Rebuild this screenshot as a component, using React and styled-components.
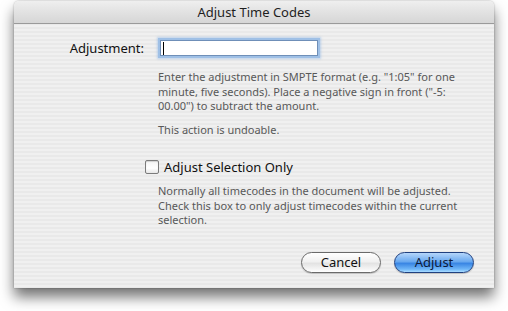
import styled, { createGlobalStyle } from "styled-components";

const GlobalStyle = createGlobalStyle`
    html, body {
        margin: 0;
        padding: 0;
        background: #ffffff;
    }
    body {
        font-family: "Noto Sans", "DejaVu Sans", sans-serif;
    }
`;

const Page = styled.div`
    width: 508px;
    height: 311px;
    padding: 1px 14px 0;
    box-sizing: border-box;
`;

const Sheet = styled.div`
    width: 480px;
    height: 287px;
    border-radius: 5px 5px 0 0;
    overflow: hidden;
    display: flex;
    flex-direction: column;
    background: repeating-linear-gradient(
        to bottom,
        #f0f0f0 0px,
        #f0f0f0 2px,
        #e9e9e9 2px,
        #e9e9e9 4px
    );
    box-shadow: 0 9px 14px rgba(0, 0, 0, 0.55), 0 0 2px rgba(0, 0, 0, 0.35);
`;

const TitleBar = styled.div`
    height: 22px;
    flex: none;
    display: flex;
    align-items: center;
    justify-content: center;
    background: linear-gradient(to bottom, #efefef 0%, #e2e2e2 50%, #d6d6d6 100%);
    border-bottom: 1px solid #9a9a9a;
    font-size: 13px;
    color: #1e1e1e;
`;

const Body = styled.div`
    flex: 1;
    display: flex;
    flex-direction: column;
    padding: 14px 20px 0 0;
`;

const Form = styled.div`
    display: grid;
    grid-template-columns: 130px 1fr;
    column-gap: 14px;
    align-items: start;
`;

const Label = styled.label`
    grid-column: 1;
    justify-self: end;
    font-size: 13px;
    color: #111;
    line-height: 20px;
`;

const Field = styled.div`
    grid-column: 2;
    width: 158px;
    height: 16px;
    margin: 2px 0 0 2px;
    background: #fff;
    border: 1px solid #6f8fb8;
    box-shadow: 0 0 0 2px #9fc0e6, 0 0 2px 3px rgba(140, 180, 230, 0.5);
    display: flex;
    align-items: center;
    padding-left: 2px;
    box-sizing: border-box;
`;

const Caret = styled.span`
    width: 1px;
    height: 13px;
    background: #000;
`;

const Help = styled.p`
    grid-column: 2;
    margin: ${(p) => p.$top}px 0 0;
    font-size: 11px;
    line-height: 14.7px;
    color: #585858;
`;

const CheckRow = styled.label`
    grid-column: 2;
    margin: 21px 0 0 -13px;
    display: flex;
    align-items: center;
    gap: 5px;
    font-size: 13px;
    color: #111;
    line-height: 16px;
`;

const Box = styled.span`
    width: 12px;
    height: 12px;
    border: 1px solid #7b7b7b;
    border-radius: 2px;
    background: linear-gradient(to bottom, #f4f4f4 0%, #ffffff 60%, #e6e6e6 100%);
    box-shadow: inset 0 1px 1px rgba(0, 0, 0, 0.15);
`;

const Buttons = styled.div`
    margin-top: auto;
    margin-bottom: 15px;
    display: flex;
    justify-content: flex-end;
    gap: 13px;
`;

const Button = styled.button`
    width: ${(p) => p.$w}px;
    height: 21px;
    border-radius: 11px;
    font-family: inherit;
    font-size: 13px;
    padding: 0;
    line-height: 19px;
    cursor: default;
    border: 1px solid ${(p) => (p.$primary ? "#20407f" : "#6a6a6a")};
    color: ${(p) => (p.$primary ? "#0c1a3a" : "#111")};
    background: ${(p) =>
        p.$primary
            ? "linear-gradient(to bottom, #b5d6fb 0%, #6aa9ef 45%, #3a86e4 55%, #6fb6f8 85%, #a9dcff 100%)"
            : "linear-gradient(to bottom, #ffffff 0%, #f1f1f1 45%, #e3e3e3 55%, #f5f5f5 85%, #ffffff 100%)"};
    box-shadow: 0 1px 1px rgba(0, 0, 0, 0.2);
`;

export default function App() {
    return (
        <>
            <GlobalStyle />
            <Page>
                <Sheet>
                    <TitleBar>Adjust Time Codes</TitleBar>
                    <Body>
                        <Form>
                            <Label>Adjustment:</Label>
                            <Field>
                                <Caret />
                            </Field>
                            <Help $top={12}>
                                Enter the adjustment in SMPTE format (e.g. "1:05" for one
                                <br />
                                minute, five seconds). Place a negative sign in front ("-5:
                                <br />
                                00.00") to subtract the amount.
                            </Help>
                            <Help $top={9}>This action is undoable.</Help>
                            <CheckRow>
                                <Box />
                                Adjust Selection Only
                            </CheckRow>
                            <Help $top={9}>
                                Normally all timecodes in the document will be adjusted.
                                <br />
                                Check this box to only adjust timecodes within the current
                                <br />
                                selection.
                            </Help>
                        </Form>
                        <Buttons>
                            <Button $w={80}>Cancel</Button>
                            <Button $w={80} $primary>
                                Adjust
                            </Button>
                        </Buttons>
                    </Body>
                </Sheet>
            </Page>
        </>
    );
}
